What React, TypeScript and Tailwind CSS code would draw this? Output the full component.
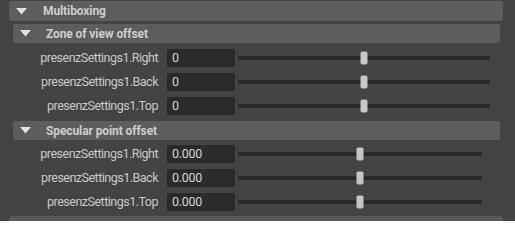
import React from "react";

function Tri() {
  return (
    <svg width="11" height="7" viewBox="0 0 11 7" className="shrink-0">
      <polygon points="0,0 11,0 5.5,6.5" fill="#e2e2e2" />
    </svg>
  );
}

function Header({ title, level }: { title: string; level: 0 | 1 }) {
  return (
    <div
      className={
        level === 0
          ? "flex h-[20px] w-[494px] items-center rounded-[3px] bg-[#5d5d5d] pl-[7px]"
          : "flex h-[19px] w-[487px] items-center rounded-[3px] bg-[#5d5d5d] pl-[7px]"
      }
    >
      <Tri />
      <span
        className={
          level === 0
            ? "ml-[16px] text-[12px] font-bold leading-none tracking-[-0.1px] text-[#cccccc]"
            : "ml-[15px] text-[12px] font-bold leading-none tracking-[-0.1px] text-[#cccccc]"
        }
      >
        {title}
      </span>
    </div>
  );
}

function Row({ label, value, trackW }: { label: string; value: string; trackW: number }) {
  return (
    <div className="flex h-[18px] items-center">
      <div className="w-[145px] text-right text-[12.5px] leading-none tracking-[-0.5px] text-[#c8c8c8]">{label}</div>
      <div className="ml-[9px] flex h-[18px] w-[68px] items-center rounded-[2px] bg-[#2b2b2b] pl-[5px] text-[12.5px] leading-none tracking-[-0.3px] text-[#d2d2d2]">
        {value}
      </div>
      <div
        className="relative ml-[3px] h-[4px] rounded-full bg-[#2a2a2a]"
        style={{ width: trackW }}
      >
        <div className="absolute left-1/2 top-1/2 h-[13px] w-[7px] -translate-x-1/2 -translate-y-1/2 rounded-[2px] bg-[#c6c6c6]" />
      </div>
    </div>
  );
}

export default function App() {
  return (
    <div className="flex h-[221px] w-[515px] overflow-hidden bg-[#444444] font-['Roboto','Liberation_Sans',Arial,sans-serif]">
      <div className="flex w-[503px] flex-col">
        <div className="ml-[9px] h-[2px] w-[494px] bg-[#3a3a3a]" />
        <div className="mt-[1px] ml-[9px] flex flex-col">
          <Header title="Multiboxing" level={0} />
          <div className="mt-[3px] ml-[4px] flex flex-col">
            <Header title="Zone of view offset" level={1} />
            <div className="mt-[6px] flex flex-col gap-[6px]">
              <Row label="presenzSettings1.Right" value="0" trackW={252} />
              <Row label="presenzSettings1.Back" value="0" trackW={252} />
              <Row label="presenzSettings1.Top" value="0" trackW={252} />
            </div>
            <div className="mt-[6px]">
              <Header title="Specular point offset" level={1} />
            </div>
            <div className="mt-[5px] flex flex-col gap-[6px]">
              <Row label="presenzSettings1.Right" value="0.000" trackW={244} />
              <Row label="presenzSettings1.Back" value="0.000" trackW={244} />
              <Row label="presenzSettings1.Top" value="0.000" trackW={244} />
            </div>
          </div>
          <div className="mt-[5px] h-[20px] w-[494px] rounded-[3px] bg-[#5a5a5a]" />
        </div>
      </div>
      <div className="w-[12px] bg-[#454545]" />
    </div>
  );
}
